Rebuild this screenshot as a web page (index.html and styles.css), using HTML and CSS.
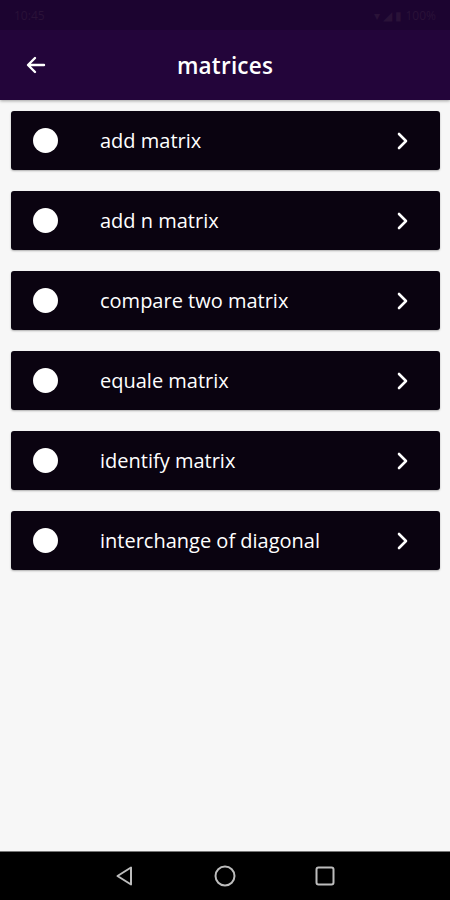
FILE: index.html
```html
<!DOCTYPE html>
<html>
<head>
<meta charset="utf-8">
<link rel="stylesheet" href="styles.css">
</head>
<body>
<div class="screen">
  <header class="top">
    <div class="status">
      <span class="st-left">10:45</span>
      <span class="st-right">▾ ◢ ▮ 100%</span>
    </div>
    <div class="appbar">
      <svg class="back" width="24" height="24" viewBox="0 0 24 24"><path d="M20 12H5M11 5l-7 7 7 7" fill="none" stroke="#fff" stroke-width="2.4" stroke-linecap="round" stroke-linejoin="round"/></svg>
      <h1 class="title">matrices</h1>
    </div>
  </header>
  <main class="list">
    <div class="card"><span class="dot"></span><span class="label">add matrix</span><svg class="chev" width="14" height="20" viewBox="0 0 14 20"><path d="M3 3l7 7-7 7" fill="none" stroke="#fff" stroke-width="2.6" stroke-linecap="round" stroke-linejoin="round"/></svg></div>
    <div class="card"><span class="dot"></span><span class="label">add n matrix</span><svg class="chev" width="14" height="20" viewBox="0 0 14 20"><path d="M3 3l7 7-7 7" fill="none" stroke="#fff" stroke-width="2.6" stroke-linecap="round" stroke-linejoin="round"/></svg></div>
    <div class="card"><span class="dot"></span><span class="label">compare two matrix</span><svg class="chev" width="14" height="20" viewBox="0 0 14 20"><path d="M3 3l7 7-7 7" fill="none" stroke="#fff" stroke-width="2.6" stroke-linecap="round" stroke-linejoin="round"/></svg></div>
    <div class="card"><span class="dot"></span><span class="label">equale matrix</span><svg class="chev" width="14" height="20" viewBox="0 0 14 20"><path d="M3 3l7 7-7 7" fill="none" stroke="#fff" stroke-width="2.6" stroke-linecap="round" stroke-linejoin="round"/></svg></div>
    <div class="card"><span class="dot"></span><span class="label">identify matrix</span><svg class="chev" width="14" height="20" viewBox="0 0 14 20"><path d="M3 3l7 7-7 7" fill="none" stroke="#fff" stroke-width="2.6" stroke-linecap="round" stroke-linejoin="round"/></svg></div>
    <div class="card"><span class="dot"></span><span class="label">interchange of diagonal</span><svg class="chev" width="14" height="20" viewBox="0 0 14 20"><path d="M3 3l7 7-7 7" fill="none" stroke="#fff" stroke-width="2.6" stroke-linecap="round" stroke-linejoin="round"/></svg></div>
  </main>
  <nav class="navbar">
    <svg width="24" height="24" viewBox="0 0 24 24"><path d="M18 3.5v17L4.5 12z" fill="none" stroke="#bdbdbd" stroke-width="2" stroke-linejoin="round"/></svg>
    <svg width="24" height="24" viewBox="0 0 24 24"><circle cx="12" cy="12" r="9.5" fill="none" stroke="#bdbdbd" stroke-width="2"/></svg>
    <svg width="24" height="24" viewBox="0 0 24 24"><rect x="3.5" y="3.5" width="17" height="17" rx="2" fill="none" stroke="#bdbdbd" stroke-width="2"/></svg>
  </nav>
</div>
</body>
</html>
```
FILE: styles.css
```css
* { box-sizing: border-box; }
html, body { margin: 0; padding: 0; }
body { width: 450px; height: 900px; background: #f7f7f7; font-family: "Open Sans", "Noto Sans", sans-serif; overflow: hidden; }
.screen { display: flex; flex-direction: column; height: 900px; }
.top { background: #23053a; box-shadow: 0 1px 3px rgba(0,0,0,0.35); }
.status { height: 30px; background: #1c0430; display: flex; justify-content: space-between; align-items: center; padding: 0 14px; font-size: 12px; color: #2a1238; }
.appbar { height: 70px; position: relative; display: flex; align-items: center; justify-content: center; }
.back { position: absolute; left: 24px; top: 23px; }
.title { margin: 0; color: #fff; font-size: 22.5px; font-weight: 600; letter-spacing: 0.2px; }
.list { flex: 1; padding: 11px 10px 0 11px; display: flex; flex-direction: column; gap: 21px; }
.card { height: 59px; background: #0a0310; border-radius: 3px; display: flex; align-items: center; padding: 0 30px 0 22px; box-shadow: 0 1px 2px rgba(0,0,0,0.3); }
.dot { width: 25px; height: 25px; border-radius: 50%; background: #fff; flex: none; }
.label { flex: 1; color: #fff; font-size: 20px; font-weight: 500; margin-left: 42px; }
.chev { flex: none; }
.navbar { height: 49px; background: #000; display: flex; justify-content: center; align-items: center; gap: 76px; border-top: 1px solid #777; }
```
